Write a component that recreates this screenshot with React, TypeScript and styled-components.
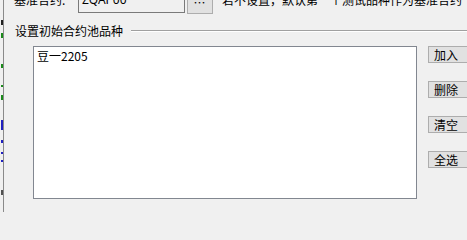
import React from "react";
import styled, { createGlobalStyle } from "styled-components";

const GlobalStyle = createGlobalStyle`
  html, body {
    margin: 0;
    padding: 0;
    background: #f0f0f0;
  }
  body {
    font-family: "Microsoft YaHei", "Noto Sans CJK SC", "Noto Sans", sans-serif;
    font-size: 12px;
    color: #000000;
  }
`;

const Window = styled.div`
  width: 467px;
  height: 212px;
  overflow: hidden;
  display: flex;
  background: #f0f0f0;
`;

const EdgeStrip = styled.div`
  width: 3px;
  flex: none;
  border-right: 1px solid #8a8a8a;
  svg {
    display: block;
  }
`;

const Main = styled.div`
  flex: 1;
  display: flex;
  flex-direction: column;
  min-width: 0;
`;

const TopRow = styled.div`
  display: flex;
  align-items: center;
  height: 22px;
  margin-top: -9px;
  white-space: nowrap;
`;

const FieldLabel = styled.span<{ $indent: number; $width: number }>`
  margin-left: ${(p) => p.$indent}px;
  width: ${(p) => p.$width}px;
  flex: none;
  line-height: 16px;
  margin-bottom: 4px;
`;

const TextBox = styled.div`
  width: 99px;
  height: 20px;
  flex: none;
  border: 1px solid #7a7a7a;
  background: #f0f0f0;
  box-sizing: content-box;
  padding: 0 3px;
  line-height: 16px;
  color: #000;
  font-family: "Noto Sans", "Liberation Sans", sans-serif;
  overflow: hidden;
`;

const PushButton = styled.button<{ $width: number; $height: number }>`
  width: ${(p) => p.$width}px;
  height: ${(p) => p.$height}px;
  flex: none;
  margin: 0;
  padding: 0 0 0 5px;
  border: 1px solid #adadad;
  background: #e1e1e1;
  font-family: inherit;
  font-size: 12px;
  line-height: 14px;
  color: #000;
  text-align: left;
`;

const EllipsisButton = styled(PushButton)`
  margin-left: 2px;
  margin-top: 2px;
  padding: 0;
  text-align: center;
  letter-spacing: 1px;
`;

const Hint = styled.span`
  margin-left: 9px;
  line-height: 16px;
  margin-bottom: 4px;
`;

const GroupHeader = styled.div`
  display: flex;
  align-items: center;
  margin-top: 9px;
  height: 17px;
`;

const GroupTitle = styled.span`
  margin-left: 11px;
  line-height: 16px;
  white-space: nowrap;
`;

const GroupRule = styled.div`
  flex: 1;
  height: 0;
  margin-left: 8px;
  margin-top: 1px;
  border-top: 1px solid #a0a0a0;
  border-bottom: 1px solid #ffffff;
`;

const PoolRow = styled.div`
  display: flex;
  align-items: flex-start;
  margin-top: 7px;
  padding-left: 29px;
`;

const ListBox = styled.div`
  flex: none;
  border: 1px solid #828790;
  background: #ffffff;
  padding: 2px 3px;
  box-sizing: content-box;
  width: 376px;
  height: 147px;
`;

const ListItem = styled.div`
  line-height: 14px;
  white-space: nowrap;
`;

const ButtonColumn = styled.div`
  display: flex;
  flex-direction: column;
  gap: 18px;
  margin-left: 11px;
`;

const items = ["豆一2205"];
const actions = ["加入", "删除", "清空", "全选"];

// slivers of the window behind, visible at the left edge
const slivers = [
  { y: 20, h: 5, c: "#202020" },
  { y: 33, h: 5, c: "#1a8a1a" },
  { y: 64, h: 4, c: "#1a8a1a" },
  { y: 85, h: 2, c: "#1a8a1a" },
  { y: 95, h: 5, c: "#1a8a1a" },
  { y: 120, h: 10, c: "#2020c0" },
  { y: 140, h: 3, c: "#2020c0" },
  { y: 152, h: 2, c: "#2020c0" },
  { y: 160, h: 2, c: "#2020c0" },
  { y: 190, h: 5, c: "#505050" },
];

export default function App() {
  return (
    <>
      <GlobalStyle />
      <Window>
        <EdgeStrip>
          <svg width="3" height="212" viewBox="0 0 3 212">
            {slivers.map((s) => (
              <rect key={s.y} x="1" y={s.y} width="2" height={s.h} fill={s.c} />
            ))}
          </svg>
        </EdgeStrip>
        <Main>
          <TopRow>
            <FieldLabel $indent={10} $width={64}>
              基准合约:
            </FieldLabel>
            <TextBox>ZQAP00</TextBox>
            <EllipsisButton $width={26} $height={21}>
              …
            </EllipsisButton>
            <Hint>若不设置，默认第一个测试品种作为基准合约</Hint>
          </TopRow>
          <GroupHeader>
            <GroupTitle>设置初始合约池品种</GroupTitle>
            <GroupRule />
          </GroupHeader>
          <PoolRow>
            <ListBox>
              {items.map((item) => (
                <ListItem key={item}>{item}</ListItem>
              ))}
            </ListBox>
            <ButtonColumn>
              {actions.map((label) => (
                <PushButton key={label} $width={45} $height={17}>
                  {label}
                </PushButton>
              ))}
            </ButtonColumn>
          </PoolRow>
        </Main>
      </Window>
    </>
  );
}
